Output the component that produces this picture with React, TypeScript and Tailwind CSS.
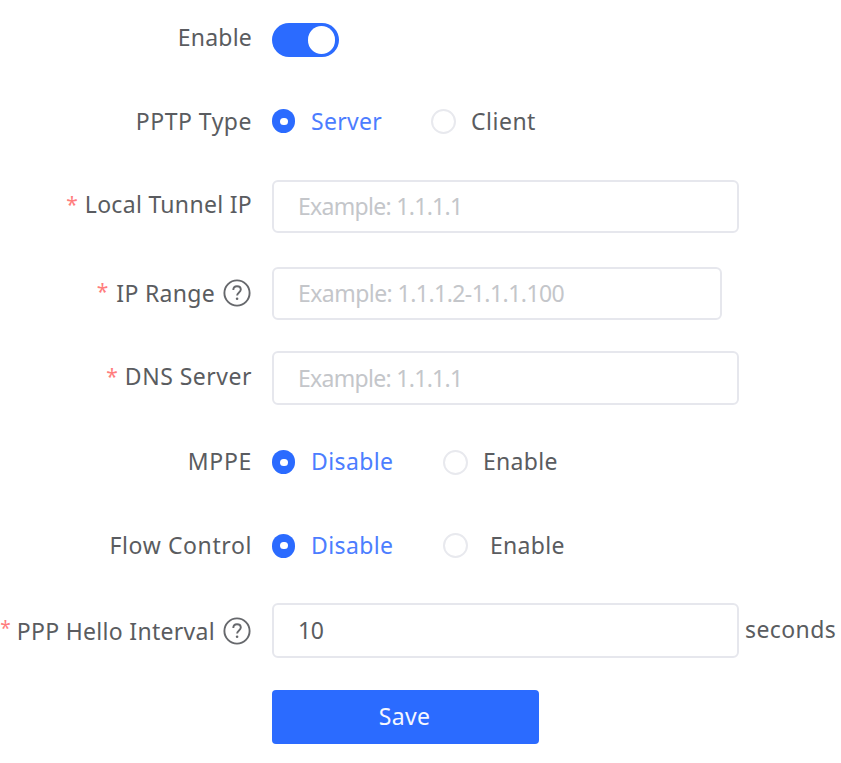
import type { ReactNode } from "react";

type RowProps = { height: string; label?: ReactNode; labelClass?: string; children: ReactNode };

function Row({ height, label, labelClass = "", children }: RowProps) {
  return (
    <div className={`flex items-center ${height}`}>
      <div className={`flex w-[252px] shrink-0 items-center justify-end ${labelClass}`}>{label}</div>
      <div className="ml-5 flex items-center">{children}</div>
    </div>
  );
}

function Star({ className = "" }: { className?: string }) {
  return <span className={`text-[#ff7d7d] ${className}`}>*</span>;
}

function Help() {
  return (
    <svg className="ml-2 h-7 w-7 shrink-0" viewBox="0 0 28 28" fill="none" stroke="#66686c" strokeWidth="1.9">
      <circle cx="14" cy="14" r="12.6" />
      <path d="M10.3 11C10.3 8.6 11.8 7.2 14 7.2s3.8 1.4 3.8 3.4c0 2.7-3.7 3-3.7 5.9" />
      <circle cx="14.1" cy="19.8" r="1.3" fill="#66686c" stroke="none" />
    </svg>
  );
}

function Radio({ checked = false }: { checked?: boolean }) {
  return checked ? (
    <span className="flex h-6 w-[23px] shrink-0 items-center justify-center rounded-full bg-[#2b6bff]">
      <span className="h-[7px] w-2 rounded-full bg-white" />
    </span>
  ) : (
    <span className="h-[25px] w-[25px] shrink-0 rounded-full border-2 border-[#e8e9ee] bg-white" />
  );
}

function Field({ width, children, className = "" }: { width: string; children: ReactNode; className?: string }) {
  return (
    <div className={`flex items-center rounded-md border-2 border-[#e6e7ed] pl-6 ${width} ${className}`}>
      {children}
    </div>
  );
}

export default function App() {
  return (
    <div className="h-[763px] w-[841px] overflow-hidden bg-white font-['Noto_Sans',sans-serif] text-[23px] leading-8 whitespace-nowrap text-[#5a5c60]">
      <Row height="h-20" labelClass="pb-[6px]" label={<span className="tracking-[0.2px]">Enable</span>}>
        <div className="flex h-[34px] w-[67px] items-center justify-end rounded-full bg-[#2b6bff] pr-1">
          <span className="h-7 w-[27px] rounded-full bg-white" />
        </div>
      </Row>
      <Row height="h-[82px]" label={<span className="tracking-[0.5px]">PPTP Type</span>}>
        <Radio checked />
        <span className="ml-4 w-[120px] tracking-[0.3px] text-[#4c7dff]">Server</span>
        <Radio />
        <span className="ml-[15px] tracking-[0.5px]">Client</span>
      </Row>
      <Row
        height="h-[88px]"
        labelClass="pb-1"
        label={<><Star className="mr-[7px] text-[21px]" /><span className="tracking-[0.3px]">Local Tunnel IP</span></>}
      >
        <Field width="w-[467px]" className="h-[53px]">
          <span className="tracking-[-0.7px] text-[#c4c6ca]">Example: 1.1.1.1</span>
        </Field>
      </Row>
      <Row
        height="h-[86px]"
        labelClass="pr-px"
        label={<><Star className="mr-2 pb-[5px] text-[21px]" /><span className="tracking-[0.3px]">IP Range</span><Help /></>}
      >
        <Field width="w-[450px]" className="h-[53px]">
          <span className="tracking-[-0.55px] text-[#c4c6ca]">Example: 1.1.1.2-1.1.1.100</span>
        </Field>
      </Row>
      <Row
        height="h-[84px]"
        labelClass="pb-1"
        label={<><Star className="mr-[7px] text-[21px]" /><span className="tracking-[0.5px]">DNS Server</span></>}
      >
        <Field width="w-[467px]" className="h-[54px]">
          <span className="tracking-[-0.7px] text-[#c4c6ca]">Example: 1.1.1.1</span>
        </Field>
      </Row>
      <Row height="h-[84px]" labelClass="pb-[2px]" label={<span className="tracking-[0.7px]">MPPE</span>}>
        <Radio checked />
        <span className="ml-4 w-[132px] pb-[2px] tracking-[0.4px] text-[#4c7dff]">Disable</span>
        <Radio />
        <span className="ml-[15px] pb-[2px] tracking-[0.3px]">Enable</span>
      </Row>
      <Row height="h-[83px]" labelClass="pb-[2px]" label={<span className="tracking-[0.6px]">Flow Control</span>}>
        <Radio checked />
        <span className="ml-4 w-[132px] pb-[2px] tracking-[0.4px] text-[#4c7dff]">Disable</span>
        <Radio />
        <span className="ml-[22px] pb-[2px] tracking-[0.3px]">Enable</span>
      </Row>
      <Row
        height="h-[87px]"
        labelClass="pr-px"
        label={<><Star className="mr-[6px] pb-[5px] text-[19px]" /><span className="tracking-[0.3px]">PPP Hello Interval</span><Help /></>}
      >
        <Field width="w-[467px]" className="h-[55px]">
          <span className="pb-[2px] tracking-[-0.5px]">10</span>
        </Field>
        <span className="ml-1.5 pb-[4px] tracking-[0.4px]">seconds</span>
      </Row>
      <Row height="h-[85px]">
        <button className="h-[54px] w-[267px] rounded bg-[#2b6bff] pr-[2px] pb-[1px] tracking-[0.3px] text-[#f4f7ff]">Save</button>
      </Row>
    </div>
  );
}
